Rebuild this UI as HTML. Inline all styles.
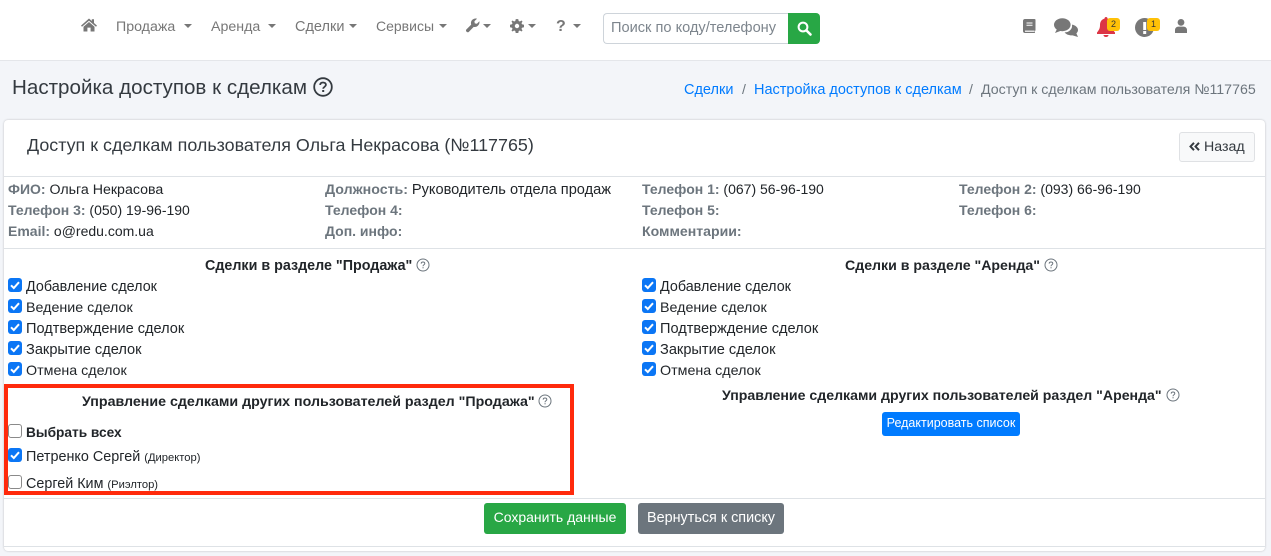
<!DOCTYPE html>
<html lang="ru"><head><meta charset="utf-8"><title>Настройка доступов к сделкам</title>
<style>
html,body{margin:0;padding:0}
body{width:1271px;height:556px;position:relative;overflow:hidden;background:#f3f5f9;font-family:"Liberation Sans",sans-serif;font-size:14px;color:#212529}
.a{position:absolute;white-space:nowrap;line-height:20px}
.nav{color:#777;font-size:14.2px}
.caret{position:absolute;width:0;height:0;border-left:4px solid transparent;border-right:4px solid transparent;border-top:4px solid #777}
.b{font-weight:bold}
.g{font-weight:bold;color:#6c757d}
.cb{position:absolute;width:14px;height:14px;border-radius:3px;box-sizing:border-box}
.cb.on{background:#0b76f5}
.cb.on svg{position:absolute;left:0;top:0}
.cb.off{background:#fff;border:1px solid #8a8a8a}
.line{position:absolute;height:1px;background:#dee2e6}
.btn{position:absolute;border-radius:3px;text-align:center;color:#fff;font-size:14px}
.bd{position:absolute;background:#ffc107;border-radius:3px;color:#333;font-size:9px;line-height:13px;text-align:center;width:13px;height:13px}
svg{position:absolute;overflow:visible}
</style></head><body>
<div style="position:absolute;left:0;top:0;width:1271px;height:60px;background:#fff;border-bottom:1px solid #e4e6ea"></div>

<svg style="left:81px;top:18px" width="16" height="14" viewBox="0 0 16 14"><path d="M8 0.5 L10.8 3 V1.2 H13 V5 L16 7.6 L15 8.7 L8 2.7 L1 8.7 L0 7.6Z M8 4 L13.5 8.7 V13.5 H9.6 V9.6 H6.4 V13.5 H2.5 V8.7Z" fill="#777"/></svg>
<div class="a nav" style="left:116px;top:17px">Продажа</div><div class="caret" style="left:184px;top:24px"></div>
<div class="a nav" style="left:211px;top:17px">Аренда</div><div class="caret" style="left:268px;top:24px"></div>
<div class="a nav" style="left:295px;top:17px;font-size:14.5px">Сделки</div><div class="caret" style="left:349px;top:24px"></div>
<div class="a nav" style="left:376px;top:16px;font-size:14px">Сервисы</div><div class="caret" style="left:439px;top:24px"></div>
<svg style="left:465px;top:18px" width="15" height="15" viewBox="0 0 15 15"><path d="M1.2 11.6 L6.2 6.6 C5.4 4 6.6 1.2 9.6 0.6 C10.6 0.4 11.4 0.5 12 0.7 L9.4 3.3 L9.8 5.4 L11.9 5.8 L14.4 3.2 C15 6.6 12 9.6 8.7 8.9 L3.7 14 C2.4 15 0.2 13 1.2 11.6Z" fill="#777"/></svg>
<div class="caret" style="left:483px;top:24px"></div>
<svg style="left:510px;top:19px" width="14" height="14" viewBox="0 0 14 14"><path d="M7 0 L8.3 .2 L8.7 2 L9.9 2.5 L11.5 1.5 L12.5 2.5 L11.5 4.1 L12 5.3 L14 5.7 V8.3 L12 8.7 L11.5 9.9 L12.5 11.5 L11.5 12.5 L9.9 11.5 L8.7 12 L8.3 14 H5.7 L5.3 12 L4.1 11.5 L2.5 12.5 L1.5 11.5 L2.5 9.9 L2 8.7 L0 8.3 V5.7 L2 5.3 L2.5 4.1 L1.5 2.5 L2.5 1.5 L4.1 2.5 L5.3 2 L5.7 .2Z M7 4.8 A2.2 2.2 0 1 0 7 9.2 A2.2 2.2 0 1 0 7 4.8Z" fill="#777" fill-rule="evenodd"/></svg>
<div class="caret" style="left:528px;top:24px"></div>
<div class="a b" style="left:556px;top:17px;color:#777;font-size:16px">?</div>
<div class="caret" style="left:573px;top:24px"></div>

<div style="position:absolute;left:603px;top:13px;width:186px;height:31px;box-sizing:border-box;border:1px solid #ced4da;border-right:0;border-radius:4px 0 0 4px;background:#fff"></div>
<div class="a" style="left:611px;top:18px;color:#7d858d;font-size:14.6px">Поиск по коду/телефону</div>
<div style="position:absolute;left:788px;top:13px;width:32px;height:31px;background:#28a745;border-radius:0 4px 4px 0"></div>
<svg style="left:797px;top:21px" width="15" height="15" viewBox="0 0 15 15"><circle cx="6" cy="6" r="4.4" fill="none" stroke="#fff" stroke-width="2"/><path d="M9.5 9.5 L13.5 13.5" stroke="#fff" stroke-width="2.6" stroke-linecap="round"/></svg>

<svg style="left:1023px;top:19px" width="13" height="15" viewBox="0 0 13 15"><path d="M2 0 H11.5 C12.2 0 12.5 .4 12.5 1 V11 C12.5 11.5 12.2 11.8 11.9 12 V14 H2 C.8 14 0 13.2 0 12 V2 C0 .8 .8 0 2 0Z" fill="#777"/><path d="M3.5 4 H9.5 M3.5 6.2 H9.5" stroke="#fff" stroke-width="1"/><path d="M2 12.2 H11.6" stroke="#fff" stroke-width="1.2"/></svg>
<svg style="left:1054px;top:18px" width="24" height="19" viewBox="0 0 24 19"><ellipse cx="8.3" cy="6.7" rx="8.3" ry="6.5" fill="#777"/><path d="M3 11 L1 15 L7 12.8Z" fill="#777"/><path d="M18 6.6 C21.5 7.2 24 9.4 24 12 C24 13.4 23.3 14.5 22.4 15.4 L24 19 L18.6 17.4 C15 17.6 12 16.4 10.6 14.4 C15 14.4 18.8 11 18 6.6Z" fill="#777"/></svg>
<svg style="left:1097px;top:17px" width="18" height="20" viewBox="0 0 18 20"><path d="M9 0 C10 0 10.5 .8 10.5 1.6 C13.4 2.4 15 4.8 15 8 C15 11.4 16 13 18 15.5 V17 H0 V15.5 C2 13 3 11.4 3 8 C3 4.8 4.6 2.4 7.5 1.6 C7.5 .8 8 0 9 0Z M6.5 18 H11.5 C11.5 19.2 10.4 20 9 20 C7.6 20 6.5 19.2 6.5 18Z" fill="#dc3545"/></svg>
<div class="bd" style="left:1107px;top:18px;">2</div>
<svg style="left:1135px;top:18px" width="19" height="19" viewBox="0 0 19 19"><circle cx="9.5" cy="9.5" r="9.5" fill="#777"/><rect x="8.2" y="4" width="3" height="8" fill="#fff"/><rect x="8.2" y="13" width="3" height="3" fill="#fff"/></svg>
<div class="bd" style="left:1147px;top:18px;">1</div>
<svg style="left:1175px;top:19px" width="12" height="14" viewBox="0 0 12 14"><circle cx="6" cy="3.4" r="3.4" fill="#777"/><path d="M0 14 V11 C0 9 1.6 7.6 3.4 7.6 H8.6 C10.4 7.6 12 9 12 11 V14Z" fill="#777"/></svg>

<div class="a" style="left:12px;top:76px;font-size:20.6px;line-height:24px;color:#343a40">Настройка доступов к сделкам</div>
<svg style="left:313px;top:77px" width="20" height="20" viewBox="0 0 20 20"><circle cx="10" cy="10" r="8.8" fill="none" stroke="#343a40" stroke-width="1.8"/><path d="M7.2 8 C7.2 6.3 8.4 5.5 10 5.5 C11.7 5.5 12.9 6.4 12.9 7.9 C12.9 9.8 10.2 9.8 10.2 11.8" fill="none" stroke="#343a40" stroke-width="1.8"/><rect x="9.2" y="13" width="2" height="2" fill="#343a40"/></svg>

<div class="a" style="left:684px;top:80px;color:#007bff;font-size:14.5px">Сделки</div>
<div class="a" style="left:742px;top:79px;color:#6c757d">/</div>
<div class="a" style="left:754px;top:80px;color:#007bff;font-size:14.5px">Настройка доступов к сделкам</div>
<div class="a" style="left:969px;top:79px;color:#6c757d">/</div>
<div class="a" style="left:981px;top:80px;color:#6c757d;font-size:14.2px">Доступ к сделкам пользователя №117765</div>

<div style="position:absolute;left:4px;top:120px;width:1261px;height:431px;background:#fff;border-radius:4px;box-shadow:0 0 2px rgba(0,0,0,.22)"></div>

<div class="a" style="left:27px;top:134px;font-size:17.9px;line-height:22px;color:#343a40">Доступ к сделкам пользователя Ольга Некрасова (№117765)</div>
<div style="position:absolute;left:1179px;top:132px;width:76px;height:30px;box-sizing:border-box;border:1px solid #dfe1e4;border-radius:3px;background:#f8f9fa"></div>
<svg style="left:1189px;top:142px" width="11" height="9" viewBox="0 0 11 9"><path d="M5 .8 L1.5 4.5 L5 8.2 M10 .8 L6.5 4.5 L10 8.2" fill="none" stroke="#343a40" stroke-width="2"/></svg>
<div class="a" style="left:1204px;top:137px;color:#343a40;font-size:14.2px">Назад</div>
<div class="line" style="left:4px;top:176px;width:1261px"></div>

<div class="a" style="left:8px;top:179px"><span class="g">ФИО:</span> <span style="font-size:14.2px">Ольга Некрасова</span></div>
<div class="a" style="left:325px;top:179px"><span class="g" style="font-size:14.2px">Должность:</span> <span style="font-size:14.6px">Руководитель отдела продаж</span></div>
<div class="a" style="left:642px;top:179px"><span class="g">Телефон 1:</span> (067) 56-96-190</div>
<div class="a" style="left:959px;top:179px"><span class="g">Телефон 2:</span> (093) 66-96-190</div>
<div class="a" style="left:8px;top:200px"><span class="g">Телефон 3:</span> (050) 19-96-190</div>
<div class="a g" style="left:325px;top:200px">Телефон 4:</div>
<div class="a g" style="left:642px;top:200px">Телефон 5:</div>
<div class="a g" style="left:959px;top:200px">Телефон 6:</div>
<div class="a" style="left:8px;top:221px"><span class="g">Email:</span> o@redu.com.ua</div>
<div class="a g" style="left:325px;top:221px">Доп. инфо:</div>
<div class="a g" style="left:642px;top:221px;font-size:14.1px">Комментарии:</div>
<div class="line" style="left:4px;top:248px;width:1261px"></div>

<div class="a b" style="left:205px;top:256px;font-size:14.3px">Сделки в разделе "Продажа"</div>
<svg style="left:416px;top:258px" width="14" height="14" viewBox="0 0 14 14"><circle cx="7" cy="7" r="6" fill="none" stroke="#6c757d" stroke-width="1"/><path d="M5.2 5.6 C5.2 4.5 6 4 7 4 C8.1 4 8.8 4.6 8.8 5.5 C8.8 6.8 7 6.7 7 8.2" fill="none" stroke="#6c757d" stroke-width="1"/><rect x="6.5" y="9.2" width="1.1" height="1.1" fill="#6c757d"/></svg>
<div class="a b" style="left:845px;top:255px;font-size:14.15px">Сделки в разделе "Аренда"</div>
<svg style="left:1044px;top:258px" width="14" height="14" viewBox="0 0 14 14"><circle cx="7" cy="7" r="6" fill="none" stroke="#6c757d" stroke-width="1"/><path d="M5.2 5.6 C5.2 4.5 6 4 7 4 C8.1 4 8.8 4.6 8.8 5.5 C8.8 6.8 7 6.7 7 8.2" fill="none" stroke="#6c757d" stroke-width="1"/><rect x="6.5" y="9.2" width="1.1" height="1.1" fill="#6c757d"/></svg>

<div class="cb on" style="left:8px;top:278px"><svg width="14" height="14" viewBox="0 0 14 14"><path d="M3 7.3 L5.8 10 L11 4.2" fill="none" stroke="#fff" stroke-width="2"/></svg></div><div class="a" style="left:26px;top:277px;font-size:14.33px">Добавление сделок</div>
<div class="cb on" style="left:8px;top:299px"><svg width="14" height="14" viewBox="0 0 14 14"><path d="M3 7.3 L5.8 10 L11 4.2" fill="none" stroke="#fff" stroke-width="2"/></svg></div><div class="a" style="left:26px;top:298px;font-size:14.27px">Ведение сделок</div>
<div class="cb on" style="left:8px;top:320px"><svg width="14" height="14" viewBox="0 0 14 14"><path d="M3 7.3 L5.8 10 L11 4.2" fill="none" stroke="#fff" stroke-width="2"/></svg></div><div class="a" style="left:26px;top:319px;font-size:14.55px">Подтверждение сделок</div>
<div class="cb on" style="left:8px;top:341px"><svg width="14" height="14" viewBox="0 0 14 14"><path d="M3 7.3 L5.8 10 L11 4.2" fill="none" stroke="#fff" stroke-width="2"/></svg></div><div class="a" style="left:26px;top:340px;font-size:14.6px">Закрытие сделок</div>
<div class="cb on" style="left:8px;top:362px"><svg width="14" height="14" viewBox="0 0 14 14"><path d="M3 7.3 L5.8 10 L11 4.2" fill="none" stroke="#fff" stroke-width="2"/></svg></div><div class="a" style="left:26px;top:361px;font-size:14.28px">Отмена сделок</div>

<div class="cb on" style="left:642px;top:278px"><svg width="14" height="14" viewBox="0 0 14 14"><path d="M3 7.3 L5.8 10 L11 4.2" fill="none" stroke="#fff" stroke-width="2"/></svg></div><div class="a" style="left:660px;top:277px;font-size:14.33px">Добавление сделок</div>
<div class="cb on" style="left:642px;top:299px"><svg width="14" height="14" viewBox="0 0 14 14"><path d="M3 7.3 L5.8 10 L11 4.2" fill="none" stroke="#fff" stroke-width="2"/></svg></div><div class="a" style="left:660px;top:298px;font-size:14.27px">Ведение сделок</div>
<div class="cb on" style="left:642px;top:320px"><svg width="14" height="14" viewBox="0 0 14 14"><path d="M3 7.3 L5.8 10 L11 4.2" fill="none" stroke="#fff" stroke-width="2"/></svg></div><div class="a" style="left:660px;top:319px;font-size:14.55px">Подтверждение сделок</div>
<div class="cb on" style="left:642px;top:341px"><svg width="14" height="14" viewBox="0 0 14 14"><path d="M3 7.3 L5.8 10 L11 4.2" fill="none" stroke="#fff" stroke-width="2"/></svg></div><div class="a" style="left:660px;top:340px;font-size:14.6px">Закрытие сделок</div>
<div class="cb on" style="left:642px;top:362px"><svg width="14" height="14" viewBox="0 0 14 14"><path d="M3 7.3 L5.8 10 L11 4.2" fill="none" stroke="#fff" stroke-width="2"/></svg></div><div class="a" style="left:660px;top:361px;font-size:14.28px">Отмена сделок</div>

<div class="a b" style="left:82px;top:392px;font-size:14.22px">Управление сделками других пользователей раздел "Продажа"</div>
<svg style="left:538px;top:394px" width="14" height="14" viewBox="0 0 14 14"><circle cx="7" cy="7" r="6" fill="none" stroke="#6c757d" stroke-width="1"/><path d="M5.2 5.6 C5.2 4.5 6 4 7 4 C8.1 4 8.8 4.6 8.8 5.5 C8.8 6.8 7 6.7 7 8.2" fill="none" stroke="#6c757d" stroke-width="1"/><rect x="6.5" y="9.2" width="1.1" height="1.1" fill="#6c757d"/></svg>
<div class="cb off" style="left:8px;top:424px"></div><div class="a b" style="left:26px;top:423px;font-size:13.7px">Выбрать всех</div>
<div class="cb on" style="left:8px;top:448px"><svg width="14" height="14" viewBox="0 0 14 14"><path d="M3 7.3 L5.8 10 L11 4.2" fill="none" stroke="#fff" stroke-width="2"/></svg></div><div class="a" style="left:26px;top:447px;font-size:14.4px">Петренко Сергей <span style="font-size:11.2px">(Директор)</span></div>
<div class="cb off" style="left:8px;top:475px"></div><div class="a" style="left:26px;top:474px;font-size:14.35px">Сергей Ким <span style="font-size:11.2px">(Риэлтор)</span></div>

<div style="position:absolute;left:4px;top:384px;width:570px;height:111px;box-sizing:border-box;border:4.5px solid #ff2a0c"></div>

<div class="a b" style="left:722px;top:385px;font-size:14.13px">Управление сделками других пользователей раздел "Аренда"</div>
<svg style="left:1166px;top:388px" width="14" height="14" viewBox="0 0 14 14"><circle cx="7" cy="7" r="6" fill="none" stroke="#6c757d" stroke-width="1"/><path d="M5.2 5.6 C5.2 4.5 6 4 7 4 C8.1 4 8.8 4.6 8.8 5.5 C8.8 6.8 7 6.7 7 8.2" fill="none" stroke="#6c757d" stroke-width="1"/><rect x="6.5" y="9.2" width="1.1" height="1.1" fill="#6c757d"/></svg>
<div class="btn" style="left:882px;top:412px;width:138px;height:24px;line-height:22px;background:#007bff;font-size:12.5px">Редактировать список</div>

<div class="line" style="left:4px;top:498px;width:1261px"></div>
<div class="btn" style="left:484px;top:503px;width:142px;height:31px;line-height:29px;background:#28a745">Сохранить данные</div>
<div class="btn" style="left:638px;top:503px;width:146px;height:31px;line-height:31px;background:#6c757d;font-size:14.4px">Вернуться к списку</div>
<div class="line" style="left:4px;top:546px;width:1261px"></div>
</body></html>
